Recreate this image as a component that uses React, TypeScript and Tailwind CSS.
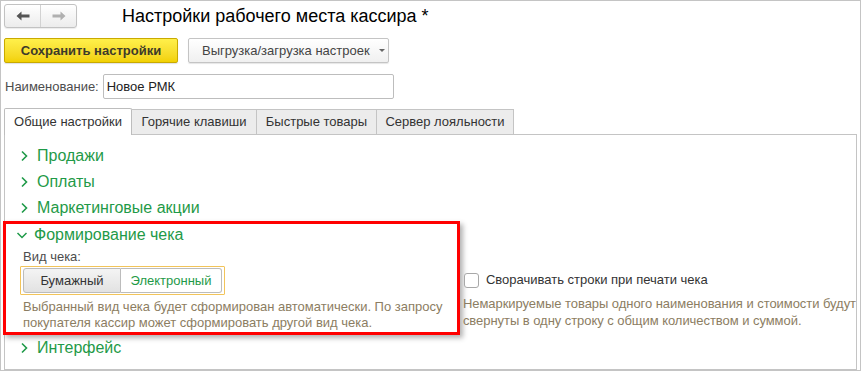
import React from "react"

function Chevron({ open }: { open?: boolean }) {
  if (open) {
    return (
      <svg width="12" height="12" viewBox="0 0 12 12" className="shrink-0">
        <polyline points="1.5,4 6,8.5 10.5,4" fill="none" stroke="#1f9a48" strokeWidth="1.5" />
      </svg>
    )
  }
  return (
    <svg width="12" height="12" viewBox="0 0 12 12" className="shrink-0">
      <polyline points="3,1.5 7.5,6 3,10.5" fill="none" stroke="#1f9a48" strokeWidth="1.6" />
    </svg>
  )
}

function Group({ title }: { title: string }) {
  return (
    <div className="flex h-[26px] items-center gap-[6px] pl-[14px]">
      <Chevron />
      <span className="text-[16px] text-[#1f9a48]">{title}</span>
    </div>
  )
}

function Arrow({ dir, color }: { dir: "left" | "right"; color: string }) {
  return (
    <svg width="14" height="10" viewBox="0 0 14 10">
      {dir === "left" ? (
        <path d="M0.5 5 L5.5 0.5 L5.5 3.5 L13.5 3.5 L13.5 6.5 L5.5 6.5 L5.5 9.5 Z" fill={color} />
      ) : (
        <path d="M13.5 5 L8.5 0.5 L8.5 3.5 L0.5 3.5 L0.5 6.5 L8.5 6.5 L8.5 9.5 Z" fill={color} />
      )}
    </svg>
  )
}

export default function App() {
  const tabs = ["Горячие клавиши", "Быстрые товары", "Сервер лояльности"]

  return (
    <div className="h-[372px] w-[862px] bg-white font-['Liberation_Sans',Arial,sans-serif] text-[13px] text-[#333]">
      <div className="flex h-[371px] w-[861px] flex-col border border-[#c4c4c4] px-[3px]">
        {/* header */}
        <div className="flex h-[27px] items-end">
          <div className="flex h-[24px] overflow-hidden rounded-[3px] border border-[#c2c2c2] bg-gradient-to-b from-white to-[#ececec] shadow-[0_1px_1px_rgba(0,0,0,0.08)]">
            <div className="flex w-[36px] items-center justify-center border-r border-[#d2d2d2]">
              <Arrow dir="left" color="#555" />
            </div>
            <div className="flex w-[35px] items-center justify-center">
              <Arrow dir="right" color="#b0b0b0" />
            </div>
          </div>
          <h1 className="mb-[1px] ml-[45px] text-[18px] leading-[22px] text-black">
            Настройки рабочего места кассира *
          </h1>
        </div>

        {/* command bar */}
        <div className="mt-[10px] flex h-[25px] gap-[10px]">
          <button className="w-[174px] rounded-[2px] border border-[#c9aa00] bg-gradient-to-b from-[#fff04a] to-[#f2d100] text-[13px] font-bold text-[#3d3a2a] shadow-[0_1px_1px_rgba(0,0,0,0.12)]">
            Сохранить настройки
          </button>
          <button className="flex w-[201px] items-center gap-[9px] rounded-[2px] border border-[#c4c4c4] bg-gradient-to-b from-white to-[#f0f0f0] pl-[13px] text-[13px] text-[#444] shadow-[0_1px_1px_rgba(0,0,0,0.1)]">
            <span>Выгрузка/загрузка настроек</span>
            <span className="h-0 w-0 border-x-[3px] border-t-[3px] border-x-transparent border-t-[#666]" />
          </button>
        </div>

        {/* name */}
        <div className="mt-[11px] flex h-[25px] items-center">
          <span className="pl-[1px] text-[#4d4d4d]">Наименование:</span>
          <div className="ml-[4px] flex h-[25px] w-[291px] items-center rounded-[2px] border border-[#bdbdbd] pl-[3px] text-[#222]">
            Новое РМК
          </div>
        </div>

        {/* tabs */}
        <div className="mt-[9px] flex h-[27px] items-end">
          <div className="flex h-[27px] w-[128px] items-center justify-center rounded-t-[2px] border border-b-0 border-[#bdbdbd] bg-white text-[#333]">
            Общие настройки
          </div>
          {tabs.map((t, i) => (
            <div
              key={t}
              className={
                "flex h-[26px] items-center justify-center border-b border-r border-t border-[#c4c4c4] bg-[#ececec] text-[#333] " +
                (i === 0 ? "w-[125px]" : i === 1 ? "w-[120px]" : "w-[137px]")
              }
            >
              {t}
            </div>
          ))}
          <div className="h-[26px] flex-1 border-b border-[#c4c4c4]" />
        </div>

        {/* panel */}
        <div className="flex flex-1 flex-col border-x border-b border-[#c4c4c4] pt-[8px]">
          <Group title="Продажи" />
          <Group title="Оплаты" />
          <Group title="Маркетинговые акции" />

          <div className="flex items-start">
            <div className="-ml-[2px] w-[458px] border-[3px] border-[#ff0000] shadow-[3px_3px_5px_rgba(0,0,0,0.3)]">
              <div className="flex h-[22px] items-center gap-[6px] pl-[10px]">
                <Chevron open />
                <span className="text-[16px] text-[#1f9a48]">Формирование чека</span>
              </div>
              <div className="mt-[3px] h-[16px] pl-[17px] leading-[16px] text-[#4d4d4d]">Вид чека:</div>
              <div className="ml-[14px] mt-[1px] flex h-[29px] w-[205px] items-center rounded-[1px] border border-[#f2c45a] pl-[2px]">
                <div className="flex h-[25px] w-[98px] items-center justify-center rounded-l-[3px] border border-[#bcbcbc] bg-gradient-to-b from-[#f4f4f4] to-[#e2e2e2] text-[#333]">
                  Бумажный
                </div>
                <div className="flex h-[25px] w-[101px] items-center justify-center rounded-r-[3px] border border-l-0 border-[#bcbcbc] bg-white text-[#1f9a48]">
                  Электронный
                </div>
              </div>
              <p className="mt-[4px] pb-[1px] pl-[17px] leading-[16px] text-[#8c7d62]">
                Выбранный вид чека будет сформирован автоматически. По запросу
                <br />
                покупателя кассир может сформировать другой вид чека.
              </p>
            </div>
            <div className="whitespace-nowrap pl-[3px] pt-[50px]">
              <label className="flex h-[18px] items-center gap-[7px]">
                <span className="ml-[1px] h-[15px] w-[15px] rounded-[3px] border border-[#a8a8a8] bg-white" />
                <span className="text-[#333]">Сворачивать строки при печати чека</span>
              </label>
              <p className="mt-[6px] leading-[17px] tracking-[-0.05px] text-[#8c7d62]">
                Немаркируемые товары одного наименования и стоимости будут
                <br />
                свернуты в одну строку с общим количеством и суммой.
              </p>
            </div>
          </div>

          <Group title="Интерфейс" />
        </div>
      </div>
    </div>
  )
}
